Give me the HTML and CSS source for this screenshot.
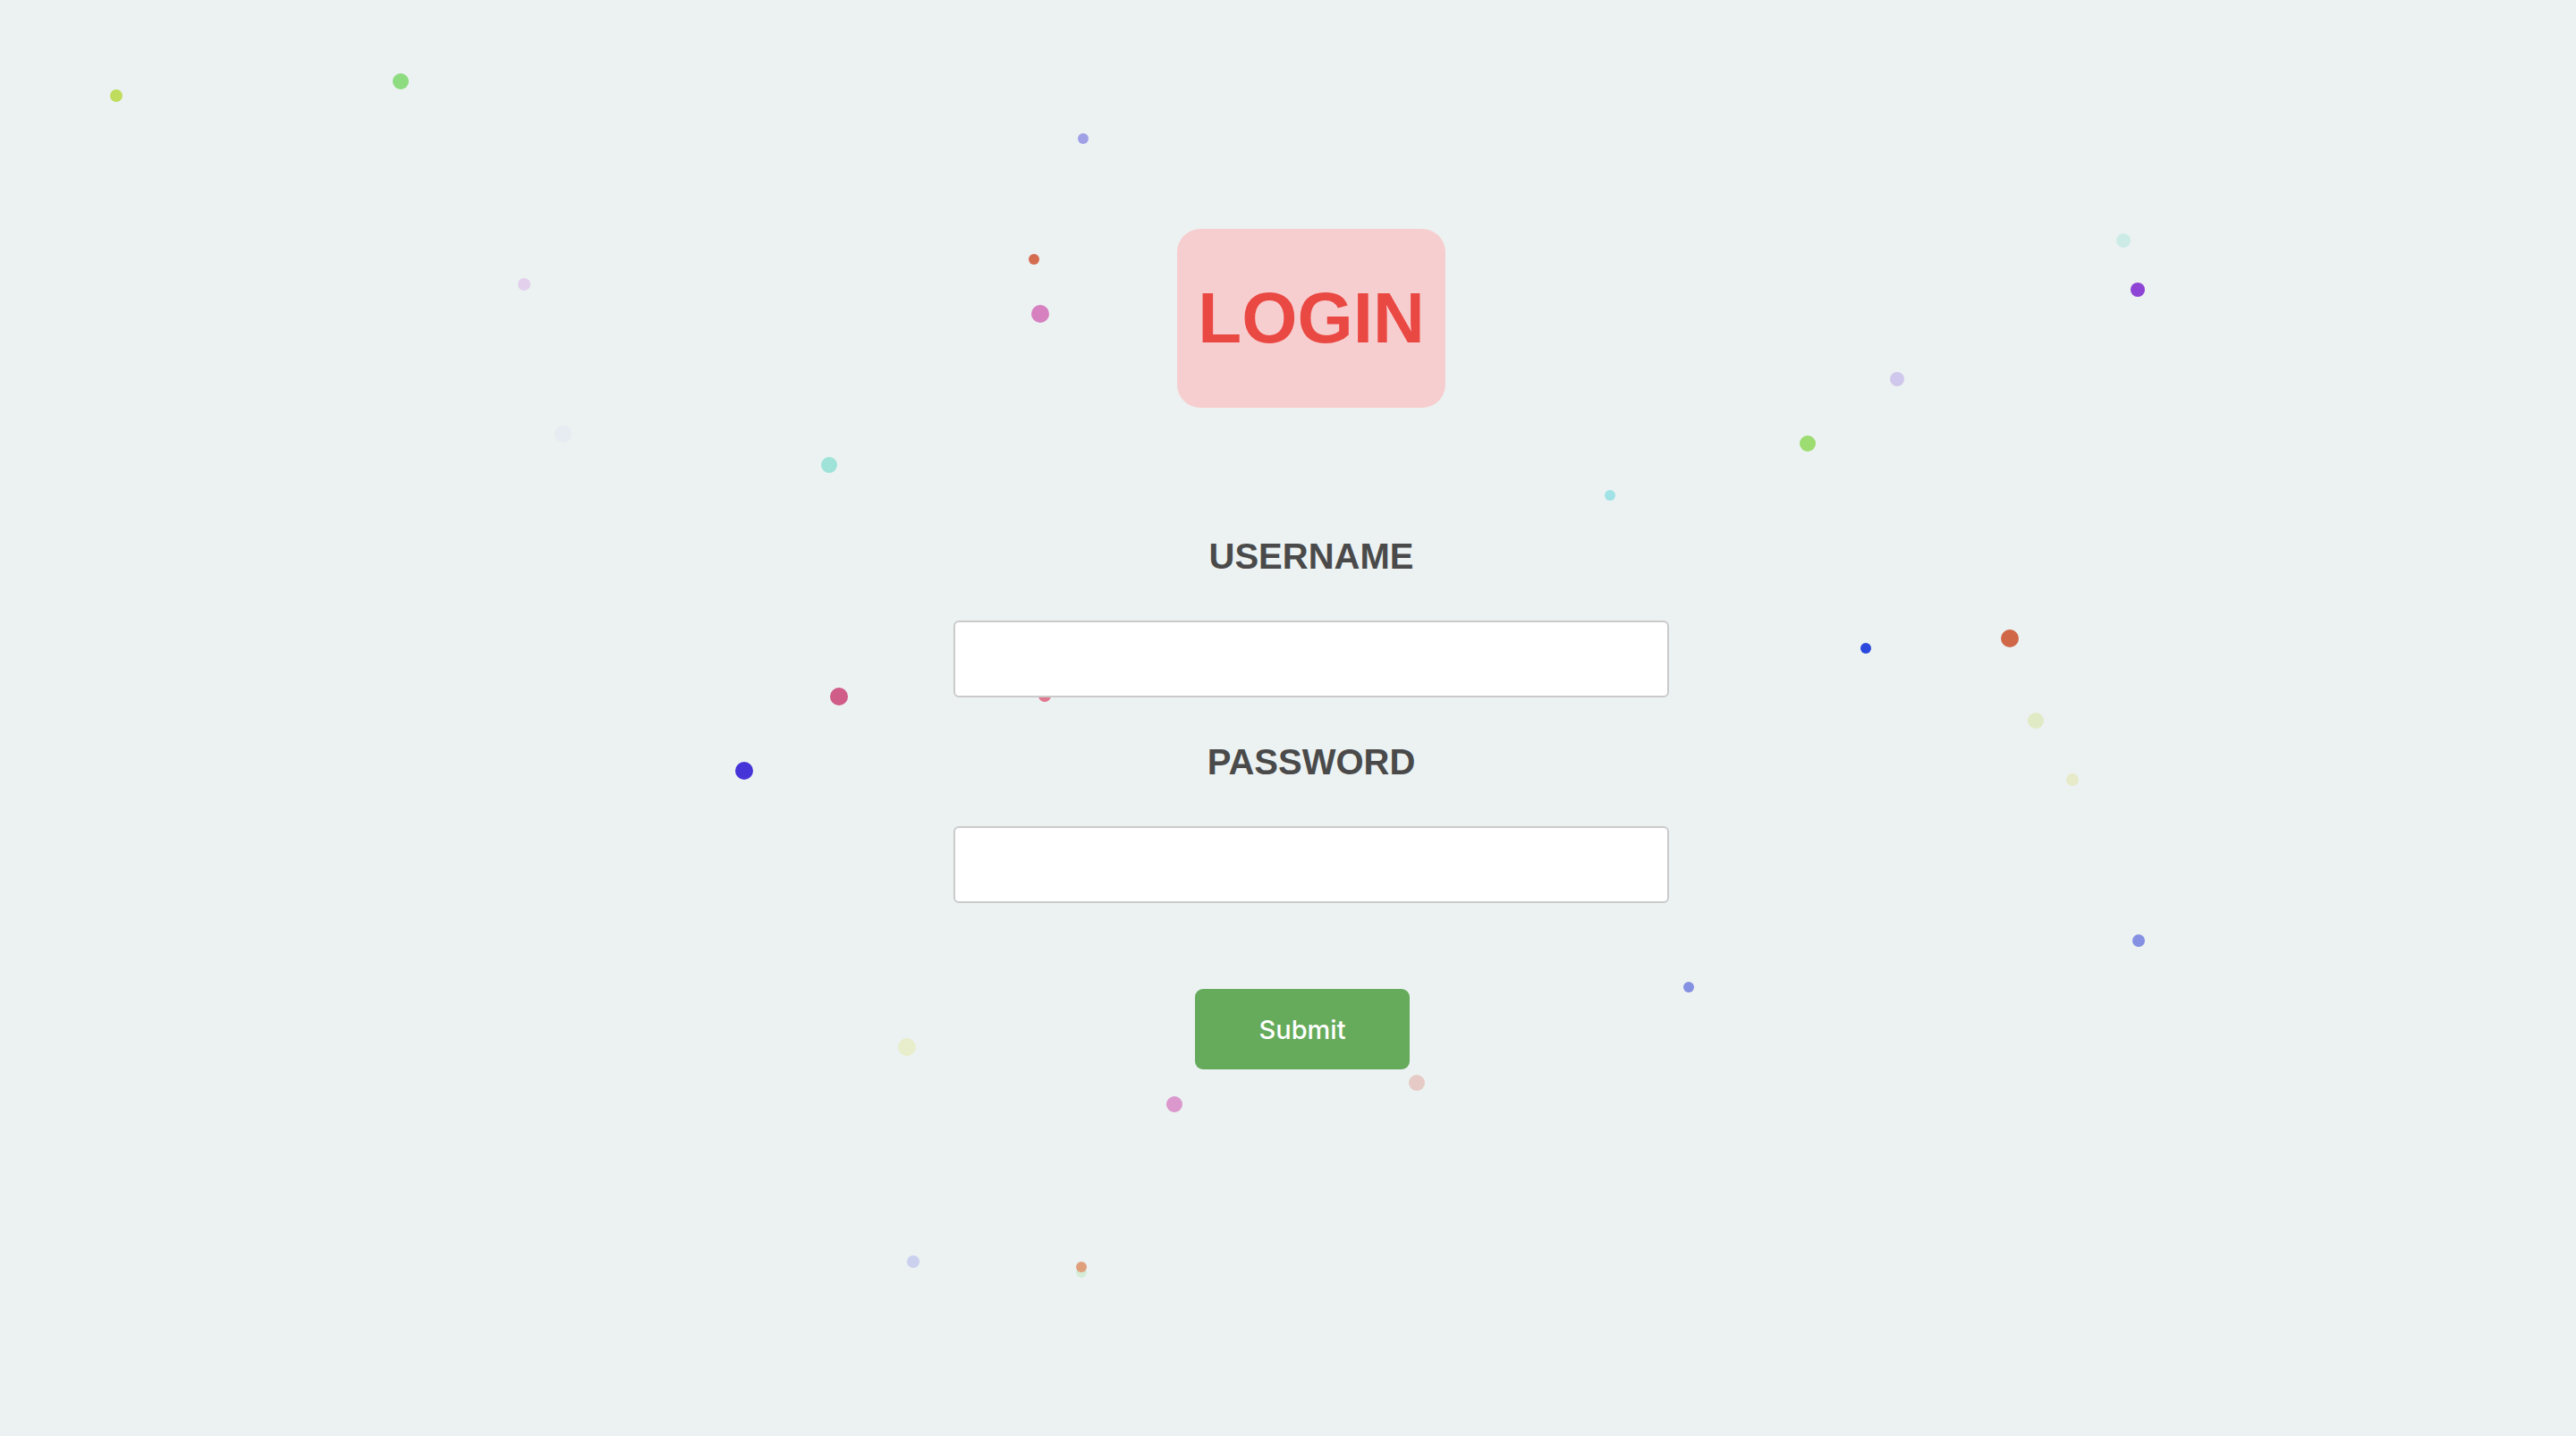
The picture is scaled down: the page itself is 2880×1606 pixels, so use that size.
FILE: index.html
```html
<!DOCTYPE html>
<html lang="en">
<head>
<meta charset="utf-8">
<title>Login</title>
<link rel="stylesheet" href="styles.css">
</head>
<body>
<div class="particles">
  <span class="dot" style="left:123px;top:100px;width:14px;height:14px;background:#bfdc5c"></span>
  <span class="dot" style="left:439px;top:82px;width:18px;height:18px;background:#8edc80"></span>
  <span class="dot" style="left:579px;top:311px;width:14px;height:14px;background:#e2d0ec"></span>
  <span class="dot" style="left:620px;top:476px;width:19px;height:19px;background:#e6ecf1"></span>
  <span class="dot" style="left:1205px;top:149px;width:12px;height:12px;background:#a0a0e6"></span>
  <span class="dot" style="left:1150px;top:284px;width:12px;height:12px;background:#d46c50"></span>
  <span class="dot" style="left:1153px;top:341px;width:20px;height:20px;background:#d680c0"></span>
  <span class="dot" style="left:918px;top:511px;width:18px;height:18px;background:#9ee2d8"></span>
  <span class="dot" style="left:928px;top:769px;width:20px;height:20px;background:#d05c88"></span>
  <span class="dot" style="left:1161px;top:771px;width:14px;height:14px;background:#e07890"></span>
  <span class="dot" style="left:822px;top:852px;width:20px;height:20px;background:#4634d8"></span>
  <span class="dot" style="left:2366px;top:261px;width:16px;height:16px;background:#cdebe6"></span>
  <span class="dot" style="left:2382px;top:316px;width:16px;height:16px;background:#8e44d4"></span>
  <span class="dot" style="left:2113px;top:416px;width:16px;height:16px;background:#d0c8ec"></span>
  <span class="dot" style="left:2012px;top:487px;width:18px;height:18px;background:#9ddc70"></span>
  <span class="dot" style="left:1794px;top:548px;width:12px;height:12px;background:#a0e2e6"></span>
  <span class="dot" style="left:2080px;top:719px;width:12px;height:12px;background:#2a48dc"></span>
  <span class="dot" style="left:2237px;top:704px;width:20px;height:20px;background:#d06848"></span>
  <span class="dot" style="left:2267px;top:797px;width:18px;height:18px;background:#e0eac4"></span>
  <span class="dot" style="left:2310px;top:865px;width:14px;height:14px;background:#e6eac8"></span>
  <span class="dot" style="left:2384px;top:1045px;width:14px;height:14px;background:#8490e2"></span>
  <span class="dot" style="left:1882px;top:1098px;width:12px;height:12px;background:#8490e2"></span>
  <span class="dot" style="left:1004px;top:1161px;width:20px;height:20px;background:#e8eecc"></span>
  <span class="dot" style="left:1304px;top:1226px;width:18px;height:18px;background:#da98cc"></span>
  <span class="dot" style="left:1575px;top:1202px;width:18px;height:18px;background:#e6cac6"></span>
  <span class="dot" style="left:1014px;top:1404px;width:14px;height:14px;background:#cad0ee"></span>
  <span class="dot" style="left:1203px;top:1417px;width:12px;height:12px;background:#d4ecd8"></span>
  <span class="dot" style="left:1203px;top:1411px;width:12px;height:12px;background:#e0a07c"></span>
</div>

<main class="page">
  <div class="title-box"><h1 class="title">LOGIN</h1></div>
  <form class="login-form">
    <label class="field-label" for="username">USERNAME</label>
    <input class="field-input" id="username" type="text">
    <label class="field-label" for="password">PASSWORD</label>
    <input class="field-input" id="password" type="password">
    <button class="submit-btn" type="button">Submit</button>
  </form>
</main>
</body>
</html>
```

FILE: styles.css
```css
html, body {
  margin: 0;
  padding: 0;
}

body {
  width: 2880px;
  height: 1606px;
  overflow: hidden;
  background: #ecf2f2;
  font-family: "Liberation Sans", Arial, sans-serif;
  position: relative;
}

.particles {
  position: absolute;
  inset: 0;
  z-index: 0;
  pointer-events: none;
}

.dot {
  position: absolute;
  border-radius: 50%;
  display: block;
}

.page {
  position: relative;
  z-index: 1;
  display: flex;
  flex-direction: column;
  align-items: center;
  padding-top: 256px;
  padding-left: 52px;
}

.title-box {
  width: 300px;
  height: 200px;
  border-radius: 26px;
  background: #f7cecf;
  display: flex;
  align-items: center;
  justify-content: center;
}

.title {
  margin: 0;
  font-family: "Liberation Sans", Arial, sans-serif;
  font-weight: 700;
  font-size: 80px;
  line-height: 1;
  color: #ea4843;
}

.login-form {
  display: flex;
  flex-direction: column;
  align-items: center;
  margin-top: 146px;
}

.field-label {
  display: block;
  font-family: "Liberation Sans", Arial, sans-serif;
  font-weight: 700;
  font-size: 40px;
  line-height: 40px;
  color: #4a4a4a;
}

.field-input {
  box-sizing: border-box;
  width: 800px;
  height: 86px;
  margin: 52px 0;
  border: 2px solid #cacaca;
  border-radius: 6px;
  background: #ffffff;
  padding: 0 16px;
  font-size: 30px;
  outline: none;
}

#password {
  margin-bottom: 96px;
}

.submit-btn {
  width: 240px;
  height: 90px;
  margin-right: 20px;
  border: none;
  border-radius: 9px;
  background: #66ab5c;
  color: #ffffff;
  font-family: "Inter", "Roboto", sans-serif;
  font-weight: 500;
  font-size: 29px;
  cursor: pointer;
}
```
